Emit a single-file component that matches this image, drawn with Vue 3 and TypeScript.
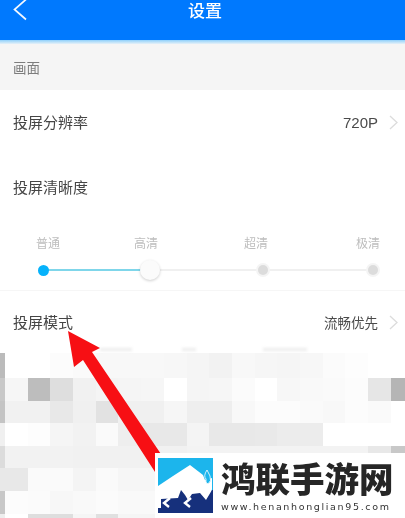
<script setup lang="ts">
const levels = ['普通', '高清', '超清', '极清']
const mosaic: string[][] = [
  ['bbb','fff','fff','fcfcfc','fafafa','f8f8f8','f8f8f8','f8f8f8','f7f7f7','f5f5f5','f2f2f2','f8f8f8','f6f6f6','f5f5f5','f7f7f7','fbfbfb','fdfdfd','fff','fff'],
  ['c8c8c8','f6f6f6','bdbdbd','dedede','f1f1f1','f4f4f4','f5f5f5','f6f6f6','fff','f5f5f5','f6f6f6','fbfbfb','fff','f7f7f7','f9f9f9','fafafa','fcfcfc','e6e6e6','b5b5b5'],
  ['c4c4c4','f1f1f1','f1f1f1','e8e8e8','f0f0f0','e2e2e2','f0f0f0','f0f0f0','f6f6f6','eeeeee','eeeeee','f8f8f8','fcfcfc','fcfcfc','fafafa','f8f8f8','fcfcfc','fafafa','fff'],
  ['f0f0f0','fff','fdfdfd','f5f5f5','f2f2f2','fafafa','eeeeee','e8e8e8','e8e8e8','f4f4f4','e8e8e8','e8e8e8','e9e9e9','ececec','ececec','fff','fff','fff','fff'],
  ['dcdcdc','f2f2f2','f2f2f2','f2f2f2','f1f1f1','f1f1f1','f1f1f1','f1f1f1','f1f1f1','f3f3f3','f3f3f3','f3f3f3','f3f3f3','f3f3f3','f3f3f3','f3f3f3','f3f3f3','e8e8e8','c8c8c8'],
  ['e8e8e8','e8e8e8','fafafa','fafafa','f4f4f4','fafafa','f6f6f6','f6f6f6','f6f6f6','f6f6f6','f6f6f6','f6f6f6','f6f6f6','f6f6f6','f6f6f6','f6f6f6','f6f6f6','f6f6f6','f0f0f0'],
  ['c8c8c8','fcfcfc','fbfbfb','f7f7f7','f9f9f9','fbfbfb','f9f9f9','f9f9f9','f9f9f9','f9f9f9','f9f9f9','f9f9f9','f9f9f9','f9f9f9','f9f9f9','f9f9f9','f9f9f9','f9f9f9','f9f9f9'],
  ['eee','fff','dedede','dedede','f5f5f5','e0e0e0','f5f5f5','f5f5f5','f5f5f5','f5f5f5','f5f5f5','f5f5f5','f5f5f5','f5f5f5','f5f5f5','f5f5f5','f5f5f5','f5f5f5','f5f5f5'],
]
const smudges = [
  { left: 100, width: 32 },
  { left: 182, width: 14 },
  { left: 263, width: 44 },
]
</script>

<template>
  <div class="page">
    <div class="soft">
      <header class="bar">
        <svg class="back" width="15" height="21" viewBox="0 0 15 21"><path d="M13.5 -1 L1.5 9.5 L13 19.5" fill="none" stroke="#f2f8ff" stroke-width="1.7" /></svg>
        <span class="title">设置</span>
      </header>
      <div class="bar-edge"></div>
      <div class="section">画面</div>
      <div class="row first">
        <span class="label">投屏分辨率</span>
        <span class="value res">720P</span>
        <svg class="chev" width="9" height="15" viewBox="0 0 9 15"><path d="M1 1 L8 7.5 L1 14" fill="none" stroke="#dcdcdc" stroke-width="1.3" /></svg>
      </div>
      <div class="clarity">
        <div class="label">投屏清晰度</div>
        <div class="levels">
          <span v-for="l in levels" :key="l" class="level">{{ l }}</span>
        </div>
        <div class="track">
          <div class="line on"></div>
          <div class="line off"></div>
          <span class="stop"><i class="dot blue"></i></span>
          <span class="stop"><i class="thumb"></i></span>
          <span class="stop"><i class="dot"></i></span>
          <span class="stop"><i class="dot"></i></span>
        </div>
      </div>
      <div class="row mode">
        <span class="label">投屏模式</span>
        <span class="value">流畅优先</span>
        <svg class="chev" width="9" height="15" viewBox="0 0 9 15"><path d="M1 1 L8 7.5 L1 14" fill="none" stroke="#dcdcdc" stroke-width="1.3" /></svg>
      </div>
      <div class="mosaic">
        <i v-for="s in smudges" :key="s.left" class="smudge" :style="{ left: s.left + 'px', width: s.width + 'px' }"></i>
        <template v-for="(r, ri) in mosaic" :key="ri">
          <i v-for="(c, ci) in r" :key="ci" :style="{ background: '#' + c }"></i>
        </template>
      </div>
    </div>

    <svg class="arrow" width="405" height="518" viewBox="0 0 405 518">
      <polygon points="68,331 100,348 92,352 165,460 155,472 83,360 74,367" fill="#f70f14" />
    </svg>

    <div class="mark">
      <svg class="logo" width="55" height="55" viewBox="0 0 55 55">
        <rect width="55" height="55" fill="#1cb5ec" />
        <path d="M0 28 L15 18 L32 7 L45 17 L47 22 L54 20 L54 31 L50 55 L0 55 Z" fill="#fff" />
        <path d="M0 50 L3 50 L3 41 L20 40 L23 32 L27 37 L30 42 L34 36 L42 35 L48 42 L54 32 L55 32 L55 55 L0 55 Z" fill="#16307c" />
        <path d="M49 12 Q45 18 48 21 Q47 25 50 26 Q54 23 52 18 Z" fill="#1cb5ec" stroke="#fff" stroke-width="0.8" />
        <path d="M12 40 L6 45 L11 49 M33 40 L27 45 L32 49" fill="none" stroke="#fff" stroke-width="2.4" />
      </svg>
      <div class="brand">
        <div class="name">鸿联手游网</div>
        <div class="url">www.henanhonglian95.com</div>
      </div>
    </div>
  </div>
</template>

<style scoped>
.page {
  position: relative;
  width: 405px;
  height: 518px;
  overflow: hidden;
  background: #fff;
  font-family: "Noto Sans CJK SC", "Liberation Sans", sans-serif;
}
.soft {
  filter: blur(0.6px);
  height: 518px;
  overflow: hidden;
}
.bar {
  height: 40px;
  background: #0079fe;
  display: flex;
  justify-content: center;
  position: relative;
}
.back {
  position: absolute;
  left: 13px;
  top: 0;
}
.title {
  color: #fff;
  font-size: 17px;
  font-weight: 500;
  line-height: 20px;
  padding-left: 5px;
}
.bar-edge {
  height: 4px;
  background: linear-gradient(#8fd0fb, #e6f1f8);
}
.section {
  height: 46px;
  background: #f5f5f5;
  padding-left: 13px;
  display: flex;
  align-items: center;
  font-size: 13.5px;
  color: #7d7d7d;
}
.row {
  display: flex;
  align-items: center;
  padding: 0 7px 0 13px;
}
.row.first {
  height: 64px;
}
.row.mode {
  height: 62px;
  border-top: 1px solid #f6f6f6;
}
.label {
  font-size: 15px;
  color: #454545;
  line-height: 20px;
}
.value {
  margin-left: auto;
  font-size: 13.5px;
  color: #4a4a4a;
}
.value.res {
  font-size: 15px;
  font-family: "Liberation Sans", sans-serif;
}
.chev {
  margin-left: 11px;
}
.clarity {
  height: 136px;
  padding: 23px 0 0 13px;
  box-sizing: border-box;
}
.levels {
  display: grid;
  grid-template-columns: 98px 110px 112px 24px;
  margin: 38px 0 0 23px;
}
.level {
  font-size: 12px;
  line-height: 16px;
  color: #bdbdbd;
  text-align: center;
  width: 24px;
  white-space: nowrap;
}
.track {
  position: relative;
  display: grid;
  grid-template-columns: 107px 113px 110px 20px;
  height: 20px;
  margin: 9px 0 0 20px;
}
.stop {
  width: 20px;
  height: 20px;
  display: flex;
  align-items: center;
  justify-content: center;
  position: relative;
}
.line {
  position: absolute;
  top: 9px;
  height: 2px;
}
.line.on {
  left: 10px;
  width: 107px;
  background: #7fd6ea;
}
.line.off {
  left: 117px;
  width: 223px;
  background: #f0f0f0;
}
.dot {
  width: 10px;
  height: 10px;
  border-radius: 50%;
  background: #dcdcdc;
  box-shadow: 0 0 0 2px #f4f4f4;
}
.dot.blue {
  width: 11px;
  height: 11px;
  background: #06b2fb;
  box-shadow: none;
}
.thumb {
  width: 20px;
  height: 20px;
  border-radius: 50%;
  background: #fbfbfb;
  box-shadow: 0 1px 3px rgba(0, 0, 0, 0.2);
}
.mosaic {
  position: relative;
  display: grid;
  grid-template-columns: 5px repeat(18, 22.7px);
  grid-template-rows: 25px repeat(6, 22.6px) 30px;
}
.mosaic i {
  display: block;
}
.mosaic .smudge {
  position: absolute;
  top: -5px;
  height: 3px;
  background: #ececec;
  filter: blur(1.5px);
}
.arrow {
  position: absolute;
  left: 0;
  top: 0;
}
.mark {
  position: absolute;
  left: 155px;
  top: 453px;
  width: 250px;
  height: 65px;
  background: #fff;
  display: flex;
  gap: 8px;
  padding: 5px 0 0 3px;
  box-sizing: border-box;
}
.logo {
  flex: none;
  filter: blur(0.3px);
}
.brand {
  display: flex;
  flex-direction: column;
  filter: blur(0.3px);
}
.name {
  font-size: 34.5px;
  line-height: 40px;
  font-weight: 900;
  color: #262626;
  white-space: nowrap;
  margin-top: -1px;
}
.url {
  font-family: "DejaVu Sans", sans-serif;
  font-size: 9.5px;
  line-height: 14px;
  letter-spacing: 1.65px;
  color: #333;
  white-space: nowrap;
  margin-top: 3px;
}
</style>
